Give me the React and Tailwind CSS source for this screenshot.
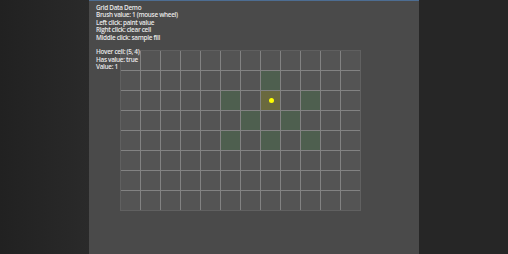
import React from 'react';

const green = new Set(['7,1', '5,2', '9,2', '6,3', '8,3', '5,4', '7,4', '9,4']);

export default function App() {
  const lines = [
    'Grid Data Demo',
    'Brush value: 1 (mouse wheel)',
    'Left click: paint value',
    'Right click: clear cell',
    'Middle click: sample fill',
    '\u00a0',
    'Hover cell: (5, 4)',
    'Has value: true',
    'Value: 1',
  ];

  const cells = [];
  for (let r = 0; r < 8; r++) {
    for (let c = 0; c < 12; c++) {
      const key = `${c},${r}`;
      let cls = 'bg-[#545454]';
      if (key === '7,2') cls = 'bg-[#6a693f] flex items-center justify-center';
      else if (green.has(key)) cls = 'bg-[#4e5f4f]';
      cells.push(
        <div key={key} className={`w-[19px] h-[19px] ${cls}`}>
          {key === '7,2' && <div className="w-[5px] h-[5px] ml-px rounded-full bg-[#ffff00]" />}
        </div>
      );
    }
  }

  return (
    <div className="flex w-[508px] h-[254px] overflow-hidden" style={{ fontFamily: '"Open Sans", "Noto Sans", sans-serif' }}>
      <div className="w-[89px] h-full bg-gradient-to-r from-[#212121] to-[#2a2a2a]" />
      <div className="relative w-[330px] h-full bg-[#4a4a4a] border-t border-[#4d6d92]">
        <div className="pt-[49px] pl-[31px]">
          <div className="inline-grid grid-cols-[repeat(12,19px)] gap-px bg-[#828282] border border-[#606060]">
            {cells}
          </div>
        </div>
        <div className="absolute left-[7px] top-[3px] text-[6.4px] font-semibold tracking-[-0.3px] leading-[7.4px] text-[#e8e8e8]">
          {lines.map((l, i) => (
            <div key={i}>{l}</div>
          ))}
        </div>
      </div>
      <div className="flex-1 h-full bg-[#262626]" />
    </div>
  );
}
